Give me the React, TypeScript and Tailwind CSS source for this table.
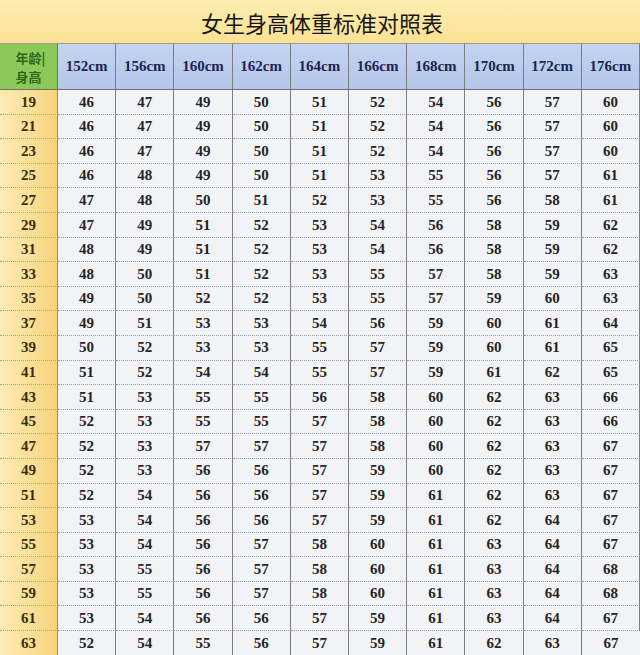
const HEIGHTS = ["152cm", "156cm", "160cm", "162cm", "164cm", "166cm", "168cm", "170cm", "172cm", "176cm"];

const ROWS: [number, number[]][] = [
  [19, [46, 47, 49, 50, 51, 52, 54, 56, 57, 60]],
  [21, [46, 47, 49, 50, 51, 52, 54, 56, 57, 60]],
  [23, [46, 47, 49, 50, 51, 52, 54, 56, 57, 60]],
  [25, [46, 48, 49, 50, 51, 53, 55, 56, 57, 61]],
  [27, [47, 48, 50, 51, 52, 53, 55, 56, 58, 61]],
  [29, [47, 49, 51, 52, 53, 54, 56, 58, 59, 62]],
  [31, [48, 49, 51, 52, 53, 54, 56, 58, 59, 62]],
  [33, [48, 50, 51, 52, 53, 55, 57, 58, 59, 63]],
  [35, [49, 50, 52, 52, 53, 55, 57, 59, 60, 63]],
  [37, [49, 51, 53, 53, 54, 56, 59, 60, 61, 64]],
  [39, [50, 52, 53, 53, 55, 57, 59, 60, 61, 65]],
  [41, [51, 52, 54, 54, 55, 57, 59, 61, 62, 65]],
  [43, [51, 53, 55, 55, 56, 58, 60, 62, 63, 66]],
  [45, [52, 53, 55, 55, 57, 58, 60, 62, 63, 66]],
  [47, [52, 53, 57, 57, 57, 58, 60, 62, 63, 67]],
  [49, [52, 53, 56, 56, 57, 59, 60, 62, 63, 67]],
  [51, [52, 54, 56, 56, 57, 59, 61, 62, 63, 67]],
  [53, [53, 54, 56, 56, 57, 59, 61, 62, 64, 67]],
  [55, [53, 54, 56, 57, 58, 60, 61, 63, 64, 67]],
  [57, [53, 55, 56, 57, 58, 60, 61, 63, 64, 68]],
  [59, [53, 55, 56, 57, 58, 60, 61, 63, 64, 68]],
  [61, [53, 54, 56, 56, 57, 59, 61, 63, 64, 67]],
  [63, [52, 54, 55, 56, 57, 59, 61, 62, 63, 67]],
];

const serif = "font-['Liberation_Serif',serif]";

export default function App() {
  return (
    <div className="w-[640px] h-[655px] overflow-hidden bg-[#f2f3f7]">
      <div className="h-[43px] flex items-center justify-center bg-gradient-to-b from-[#fdedb0] to-[#fbe294]">
        <h1 className="text-[22px] leading-none text-[#161616] font-['Noto_Sans_CJK_SC',sans-serif] pl-[4px]">
          女生身高体重标准对照表
        </h1>
      </div>

      <div className="grid grid-cols-[58px_repeat(10,minmax(0,1fr))] grid-rows-[47px_repeat(23,24.6px)]">
        <div className="flex flex-col items-center justify-center bg-[#8dc95a] border-t border-r border-b border-t-[#9a9a9a] border-r-[#6f6f6f] border-b-[#6f6f6f] text-[13px] leading-[19px] font-bold text-[#2b6a17] font-['Noto_Sans_CJK_SC',sans-serif]">
          <span className="pl-[4px]">年龄|</span>
          <span>身高</span>
        </div>
        {HEIGHTS.map((h) => (
          <div
            key={h}
            className={`flex items-center justify-center bg-gradient-to-b from-[#c3d3f0] to-[#b4c6ea] border-t border-r border-b border-t-[#9a9a9a] border-r-[#7c7c7c] border-b-[#6f6f6f] last:border-r-0 text-[15px] font-bold text-[#1c2552] ${serif}`}
          >
            {h}
          </div>
        ))}

        {ROWS.map(([age, values]) => (
          <Row key={age} age={age} values={values} />
        ))}
      </div>
    </div>
  );
}

function Row({ age, values }: { age: number; values: number[] }) {
  return (
    <>
      <div
        className={`flex items-center justify-center bg-gradient-to-r from-[#fcecb4] to-[#f6d47c] border-r border-b border-r-[#8a8a8a] border-b-[#a3a3a3] [border-bottom-style:dotted] text-[15px] font-bold text-[#3d2c0c] ${serif}`}
      >
        {age}
      </div>
      {values.map((v, i) => (
        <div
          key={i}
          className={`flex items-center justify-center bg-[#f2f3f7] border-r border-b border-r-[#7d7d7d] border-b-[#9a9a9a] [border-bottom-style:dotted] last:border-r-0 text-[15px] font-bold text-[#252525] ${serif}`}
        >
          {v}
        </div>
      ))}
    </>
  );
}
